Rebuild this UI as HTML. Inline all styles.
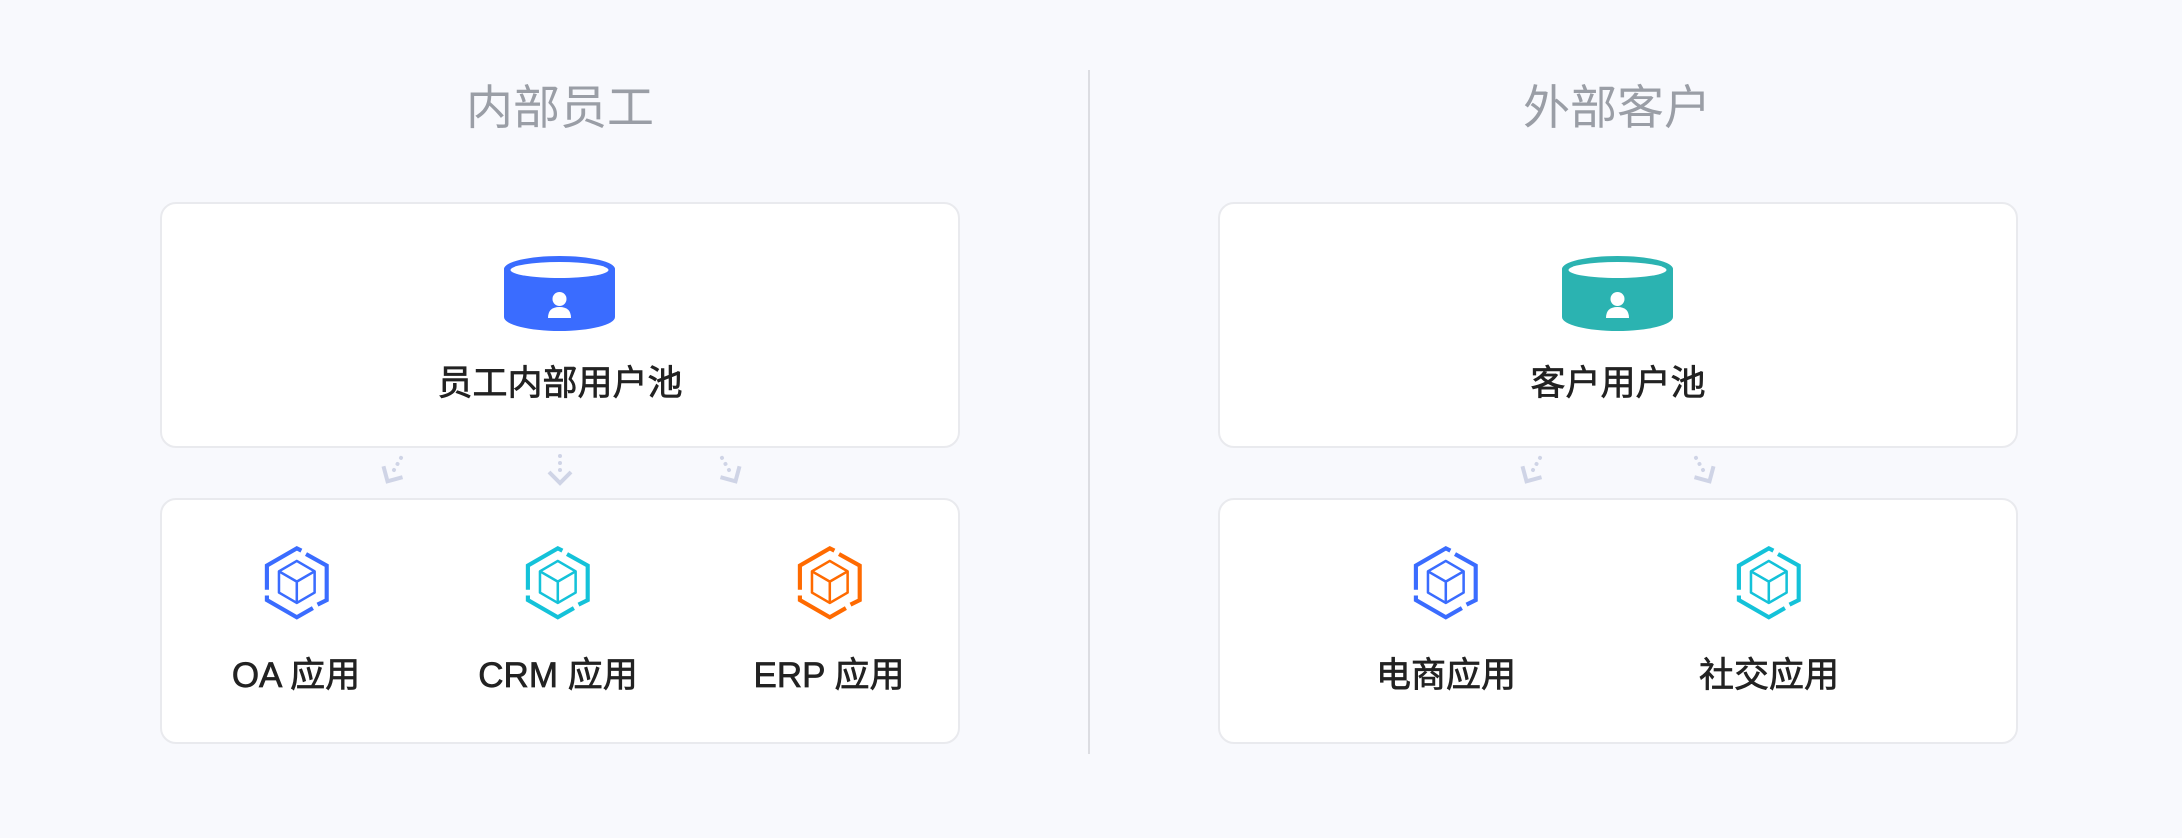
<!DOCTYPE html>
<html><head><meta charset="utf-8"><style>
*{margin:0;padding:0;box-sizing:border-box}
body{width:2182px;height:838px;background:#f8f9fd;position:relative;overflow:hidden;font-family:"Liberation Sans","Noto Sans CJK SC",sans-serif}
.t{position:absolute;top:78px;width:400px;text-align:center;font-size:47px;color:#9a9ea6;line-height:60px}
.card{position:absolute;background:#fff;border:2px solid #e9eaee;border-radius:16px}
.lbl{position:absolute;width:360px;text-align:center;font-size:35px;color:#222;line-height:40px;font-weight:400;-webkit-text-stroke:0.7px #222}
.ab{position:absolute}
</style></head><body>
<div class="t" style="left:360px">内部员工</div>
<div class="t" style="left:1417px">外部客户</div>
<div style="position:absolute;left:1088px;top:70px;width:2px;height:684px;background:#dcdde2"></div>

<div class="card" style="left:160px;top:202px;width:800px;height:246px"></div>
<div class="card" style="left:160px;top:498px;width:800px;height:246px"></div>
<div class="card" style="left:1218px;top:202px;width:800px;height:246px"></div>
<div class="card" style="left:1218px;top:498px;width:800px;height:246px"></div>

<svg class="ab" style="left:503px;top:255px" width="113" height="78" viewBox="0 0 113 78"><path d="M1,14 A55.5,13 0 0 1 112,14 L112,62 A55.5,14 0 0 1 1,62 Z" fill="#3a6cff"/><ellipse cx="56.5" cy="15" rx="49" ry="8" fill="#fff"/><circle cx="56.5" cy="44" r="7" fill="#fff"/><path d="M45,63 Q45,52 56.5,52 Q68,52 68,63 Z" fill="#fff"/></svg>
<svg class="ab" style="left:1561px;top:255px" width="113" height="78" viewBox="0 0 113 78"><path d="M1,14 A55.5,13 0 0 1 112,14 L112,62 A55.5,14 0 0 1 1,62 Z" fill="#2bb3b1"/><ellipse cx="56.5" cy="15" rx="49" ry="8" fill="#fff"/><circle cx="56.5" cy="44" r="7" fill="#fff"/><path d="M45,63 Q45,52 56.5,52 Q68,52 68,63 Z" fill="#fff"/></svg>

<div class="lbl" style="left:380px;top:364px">员工内部用户池</div>
<div class="lbl" style="left:1438px;top:364px">客户用户池</div>

<svg width="0" height="0" style="position:absolute"><defs>
<g id="arr"><circle cx="0" cy="-14" r="2" fill="#cfd4e6"/><circle cx="0" cy="-7" r="2" fill="#cfd4e6"/><circle cx="0" cy="0" r="2" fill="#cfd4e6"/><path d="M-11,2 L0,13 L11,2" stroke="#cfd4e6" stroke-width="4" fill="none"/></g>
<g id="hex"><path d="M36,4 L32,2 L6,17 L6,38 M6,43 L6,47 L32,62 L46,54 M50,51 L58,47 L58,17 L40,7" fill="none" stroke-width="3.6"/><path d="M32,13 L47.5,22 L47.5,40.5 L32,49.5 L16.5,40.5 L16.5,22 Z M16.5,22 L32,31 L47.5,22 M32,31 L32,49.5" fill="none" stroke-width="2.2" stroke-linejoin="round"/></g>
</defs></svg>
<svg class="ab" style="left:0;top:0" width="2182" height="838">
<use href="#arr" transform="translate(394,470) rotate(30)"/>
<use href="#arr" transform="translate(560,470)"/>
<use href="#arr" transform="translate(729,470) rotate(-30)"/>
<use href="#arr" transform="translate(1533,470) rotate(30)"/>
<use href="#arr" transform="translate(1703,470) rotate(-30)"/>
<use href="#hex" transform="translate(260,546) scale(1.15)" stroke="#3a6cff"/>
<use href="#hex" transform="translate(521,546) scale(1.15)" stroke="#14c2d9"/>
<use href="#hex" transform="translate(793,546) scale(1.15)" stroke="#ff6a00"/>
<use href="#hex" transform="translate(1409,546) scale(1.15)" stroke="#3a6cff"/>
<use href="#hex" transform="translate(1732,546) scale(1.15)" stroke="#14c2d9"/>
</svg>

<div class="lbl" style="left:116px;top:656px">OA 应用</div>
<div class="lbl" style="left:378px;top:656px">CRM 应用</div>
<div class="lbl" style="left:649px;top:656px">ERP 应用</div>
<div class="lbl" style="left:1266px;top:656px">电商应用</div>
<div class="lbl" style="left:1589px;top:656px">社交应用</div>
</body></html>
